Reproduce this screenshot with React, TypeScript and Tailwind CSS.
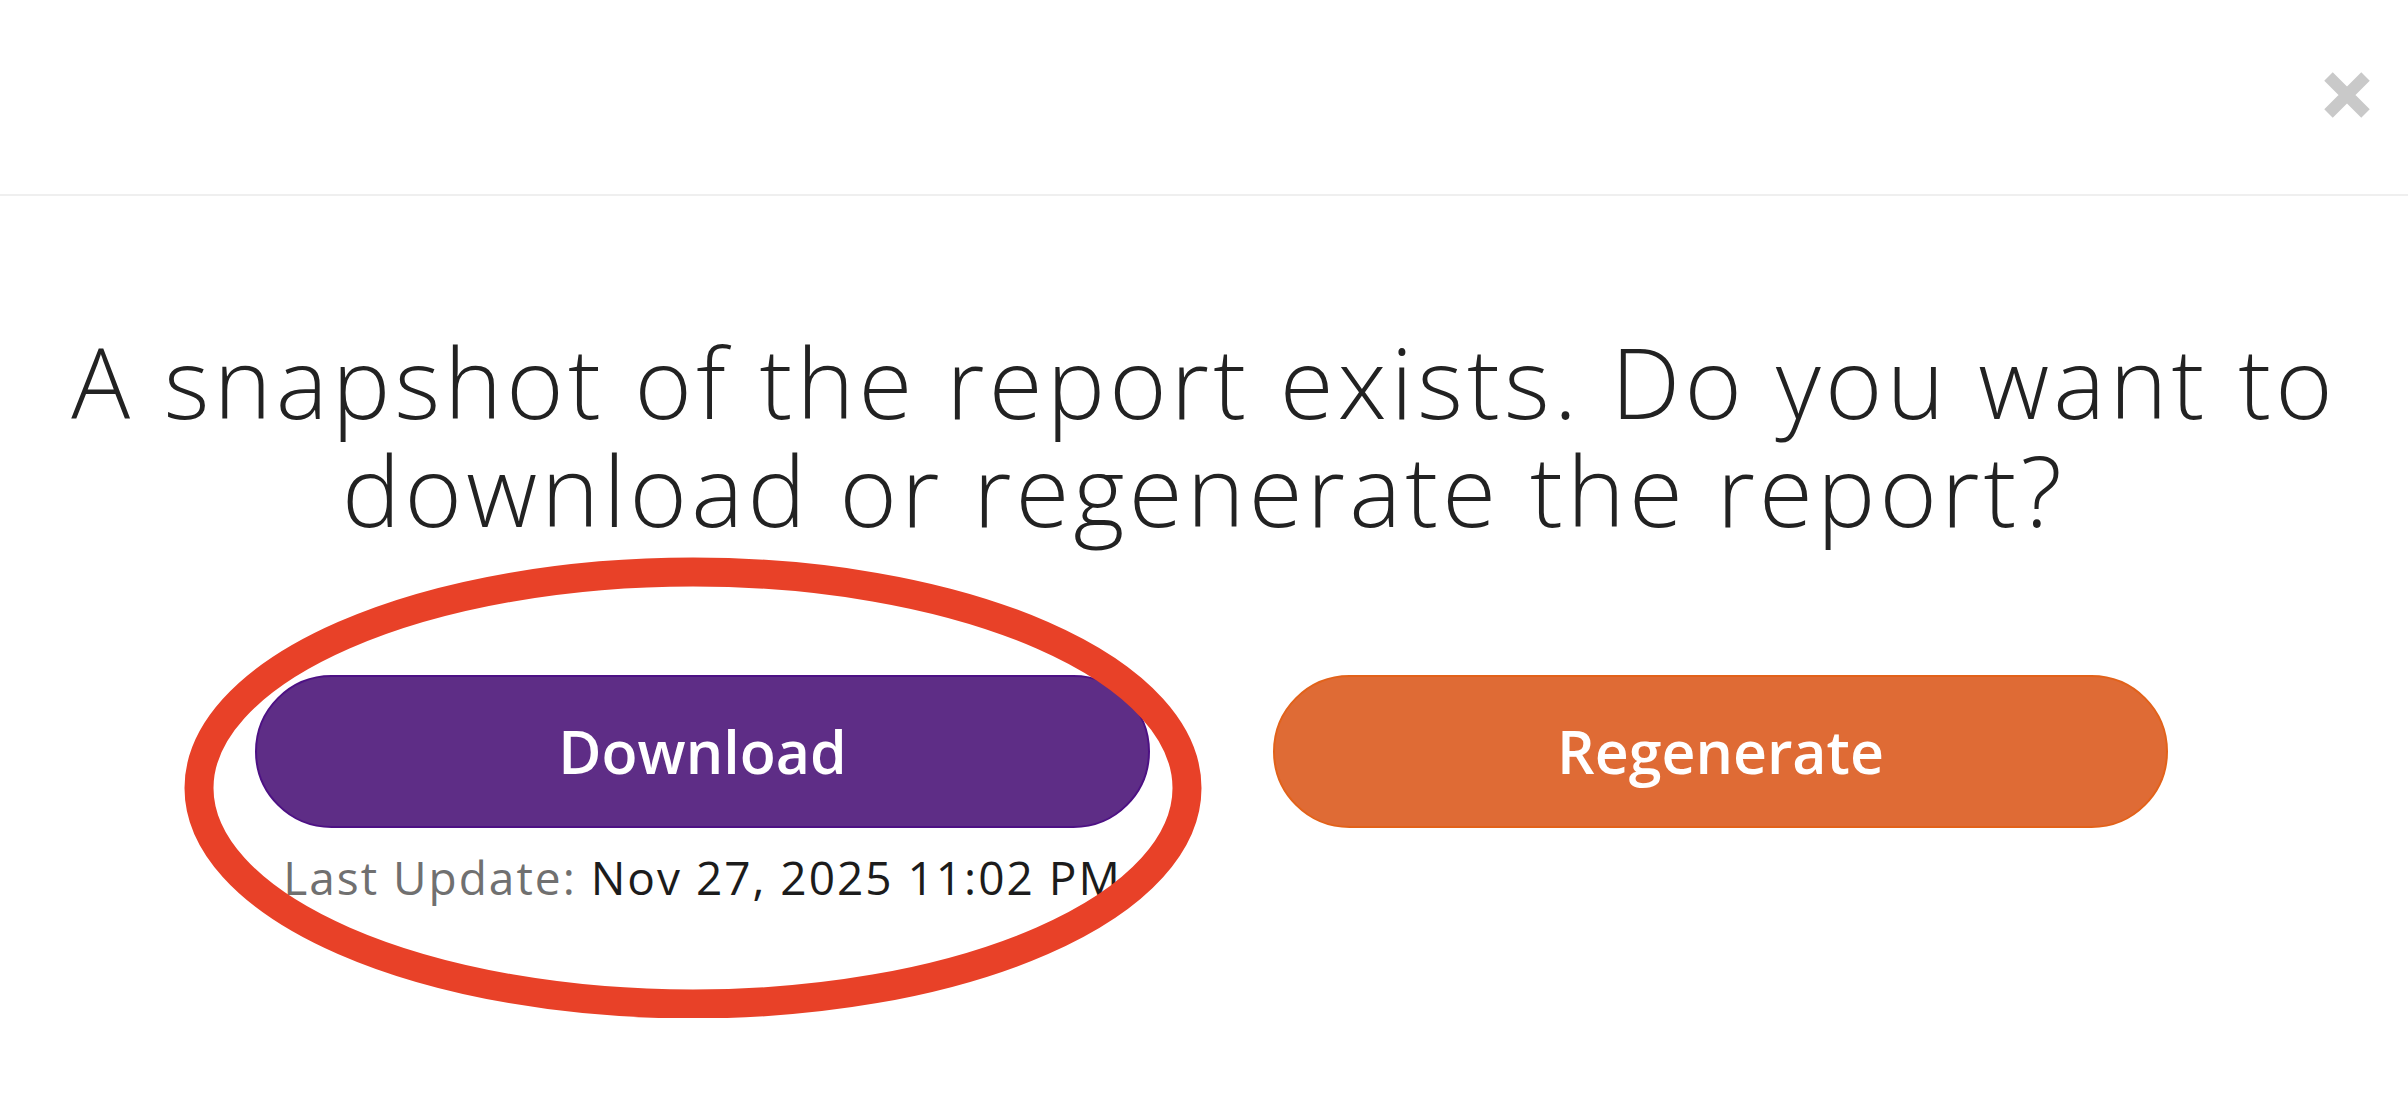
import React from 'react';

const FONT = "font-['Open_Sans','Noto_Sans',sans-serif]";

const CloseIcon: React.FC = () => (
  <svg width="46" height="46" viewBox="0 0 46 46" aria-hidden>
    <path d="M4.5 4.5 L41.5 41.5 M41.5 4.5 L4.5 41.5" stroke="#c9c9c9" strokeWidth="12" fill="none" />
  </svg>
);

const App: React.FC = () => {
  return (
    <div className={`min-h-[1102px] w-full bg-white text-[#222] ${FONT}`}>
      <header className="h-[196px] flex items-start justify-end border-b-2 border-[#efefef] pr-[38px] pt-[72px]">
        <button type="button" aria-label="Close" className="block">
          <CloseIcon />
        </button>
      </header>

      <h2 className="mt-[131px] text-center text-[98px] leading-[108px] font-light tracking-[4.2px] text-[#222]">
        A snapshot of the report exists. Do you want to
        <br />
        download or regenerate the report?
      </h2>

      <div className="mt-[132px] flex justify-center gap-[123px] pl-[15px]">
        <div className="relative flex flex-col items-center">
          <button
            type="button"
            className="h-[153px] w-[895px] rounded-full border-2 border-[#4d1184] bg-[#5e2d86] text-[59px] font-semibold text-white"
          >
            Download
          </button>
          <p className="mt-[21px] text-[46px] leading-[56px] tracking-[2px] whitespace-nowrap">
            <span className="text-[#707070]">Last Update:</span> <span className="text-[#1c1c1c]">Nov 27, 2025 11:02 PM</span>
          </p>
          <svg
            className="absolute left-[-71px] top-[-118px] pointer-events-none"
            width="1018"
            height="461"
            viewBox="0 0 1018 461"
            aria-hidden
          >
            <ellipse cx="509" cy="231" rx="494" ry="216" fill="none" stroke="#e84128" strokeWidth="29" />
          </svg>
        </div>
        <div className="flex flex-col items-center">
          <button
            type="button"
            className="h-[153px] w-[895px] rounded-full border-2 border-[#e2621a] bg-[#df6b35] text-[59px] font-semibold text-white"
          >
            Regenerate
          </button>
        </div>
      </div>
    </div>
  );
};

export default App;
